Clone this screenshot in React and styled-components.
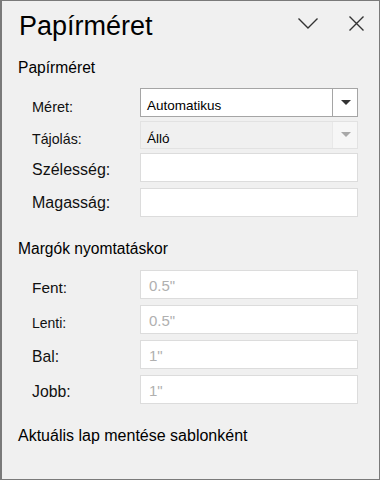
import React from 'react'
import styled, { createGlobalStyle } from 'styled-components'

const GlobalStyle = createGlobalStyle`
    html, body {
        margin: 0;
        padding: 0;
        background: #f0f0f0;
    }
    * {
        box-sizing: border-box;
    }
`;

const paperRows = [
    { label: 'Méret:', size: 14.5, drop: 4.5, kind: 'select', value: 'Automatikus' },
    { label: 'Tájolás:', size: 14.2, drop: 4, kind: 'disabled', value: 'Álló' },
    { label: 'Szélesség:', size: 16, drop: 2.7, kind: 'input' },
    { label: 'Magasság:', size: 16, drop: 1, kind: 'input' },
];

const marginRows = [
    { label: 'Fent:', size: 15.4, drop: 4, value: '0.5"' },
    { label: 'Lenti:', size: 14, drop: 3.6, value: '0.5"' },
    { label: 'Bal:', size: 15.7, drop: 2.7, value: '1"' },
    { label: 'Jobb:', size: 15.8, drop: 2.7, value: '1"' },
];

function ChevronIcon() {
    return (
        <svg width="22" height="13" viewBox="0 0 22 13">
            <polyline points="1.5,1.5 11,11 20.5,1.5" fill="none" stroke="#333" strokeWidth="1.4" />
        </svg>
    )
}

function CloseIcon() {
    return (
        <svg width="17" height="17" viewBox="0 0 17 17">
            <path d="M1.5 1.5 L15.5 15.5 M15.5 1.5 L1.5 15.5" fill="none" stroke="#333" strokeWidth="1.4" />
        </svg>
    )
}

function Field({ row }) {
    if (row.kind === 'select' || row.kind === 'disabled') {
        const off = row.kind === 'disabled'
        return (
            <SelectBox $off={off}>
                <SelectText $off={off}>{row.value}</SelectText>
                <ArrowCell $off={off}><Arrow $off={off} /></ArrowCell>
            </SelectBox>
        )
    }
    return <TextBox />
}

function App() {
    return (
        <Panel>
            <GlobalStyle />
            <Header>
                <Title>Papírméret</Title>
                <HeaderIcons>
                    <ChevronIcon />
                    <CloseIcon />
                </HeaderIcons>
            </Header>

            <SectionTitle $top={15.6}>Papírméret</SectionTitle>
            <Rows $top={10.4}>
                {paperRows.map((row) => (
                    <Row key={row.label} $h={row.kind === 'select' ? 27 : row.kind === 'disabled' ? 26 : 29}>
                        <Label $size={row.size} $drop={row.drop}>{row.label}</Label>
                        <Field row={row} />
                    </Row>
                ))}
            </Rows>

            <SectionTitle $top={21.6}>Margók nyomtatáskor</SectionTitle>
            <Rows $top={11.4}>
                {marginRows.map((row) => (
                    <Row key={row.label} $h={29}>
                        <Label $size={row.size} $drop={row.drop}>{row.label}</Label>
                        <TextBox><Placeholder>{row.value}</Placeholder></TextBox>
                    </Row>
                ))}
            </Rows>

            <SectionTitle $top={22} $size={16}>Aktuális lap mentése sablonként</SectionTitle>
        </Panel>
    )
}

const Panel = styled.div`
    width: 380px;
    height: 480px;
    background: #f0f0f0;
    border: 1px solid #7a7a7a;
    border-left-width: 2px;
    padding: 9px 14px 0 16px;
    font-family: "Liberation Sans", Arial, sans-serif;
    color: #111;
    overflow: hidden;
`;

const Header = styled.div`
    display: flex;
    align-items: flex-start;
`;

const Title = styled.h1`
    margin: 0 0 0 1px;
    font-size: 27px;
    font-weight: 400;
    line-height: 32px;
    color: #000;
    flex: 1;
`;

const HeaderIcons = styled.div`
    display: flex;
    align-items: center;
    gap: 29px;
    margin-top: 5px;
    height: 17px;
    svg {
        display: block;
    }
`;

const SectionTitle = styled.div`
    margin-top: ${(p) => p.$top}px;
    font-size: ${(p) => p.$size || 15.6}px;
    line-height: 20px;
    color: #000;
`;

const Rows = styled.div`
    display: flex;
    flex-direction: column;
    gap: 6px;
    margin-top: ${(p) => p.$top}px;
`;

const Row = styled.div`
    display: grid;
    grid-template-columns: 108px 218px;
    align-items: center;
    padding-left: 14px;
    height: ${(p) => p.$h}px;
`;

const Label = styled.div`
    font-size: ${(p) => p.$size}px;
    line-height: 20px;
    padding-top: ${(p) => p.$drop * 2}px;
    color: #111;
`;

const SelectBox = styled.div`
    display: flex;
    height: 100%;
    background: ${(p) => (p.$off ? '#f0f0f0' : '#fff')};
    border: 1px solid ${(p) => (p.$off ? '#e2e2e2' : '#a5a5a5')};
`;

const SelectText = styled.div`
    flex: 1;
    display: flex;
    align-items: center;
    padding: 7px 0 0 6px;
    font-size: 13.5px;
    color: #000;
`;

const ArrowCell = styled.div`
    width: 25px;
    display: flex;
    align-items: center;
    justify-content: center;
    border-left: 1px solid ${(p) => (p.$off ? '#e8e8e8' : '#a5a5a5')};
    background: ${(p) => (p.$off ? '#f6f6f6' : '#fff')};
`;

const Arrow = styled.div`
    width: 0;
    height: 0;
    border-left: 5px solid transparent;
    border-right: 5px solid transparent;
    border-top: 5px solid ${(p) => (p.$off ? '#a8a8a8' : '#333')};
    margin-left: 1px;
`;

const TextBox = styled.div`
    height: 100%;
    display: flex;
    align-items: center;
    background: #fff;
    border: 1px solid #dcdcdc;
    padding: 2px 0 0 8px;
`;

const Placeholder = styled.span`
    font-size: 15px;
    color: #b0b0b0;
`;

export default App
